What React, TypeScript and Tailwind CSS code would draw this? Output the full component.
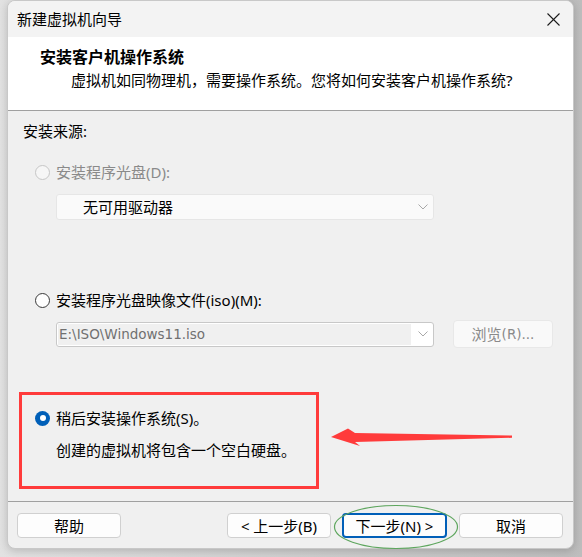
import type { ReactNode } from 'react';

const font = "font-['Noto_Sans','Noto_Sans_CJK_SC',sans-serif]";

function Radio({ state }: { state: 'disabled' | 'off' | 'on' }) {
  if (state === 'on') {
    return (
      <span className="w-[15px] h-[15px] shrink-0 rounded-full bg-[#005fb8] flex items-center justify-center">
        <span className="w-[6px] h-[6px] rounded-full bg-white" />
      </span>
    );
  }
  if (state === 'disabled') {
    return <span className="w-[15px] h-[15px] shrink-0 rounded-full border border-[#c6c6c6] bg-[#f6f6f6]" />;
  }
  return <span className="w-[15px] h-[15px] shrink-0 rounded-full border border-[#3a3a3a] bg-white" />;
}

function Chevron() {
  return (
    <svg width="10" height="6" viewBox="0 0 10 6" className="shrink-0">
      <polyline points="0.5,0.5 5,5 9.5,0.5" fill="none" stroke="#a8a8a8" strokeWidth="1" />
    </svg>
  );
}

function Button({ children, focused, width = 'w-[104px]' }: { children: ReactNode; focused?: boolean; width?: string }) {
  return (
    <button
      type="button"
      className={
        'h-[25px] rounded-[4px] bg-[#fdfdfd] text-[15px] leading-[20px] text-black flex items-center justify-center ' +
        width +
        (focused ? ' border-2 border-[#005fb8]' : ' border border-[#d0d0d0]')
      }
    >
      {children}
    </button>
  );
}

export default function App() {
  return (
    <div className={`relative w-[582px] h-[557px] overflow-hidden bg-linear-to-r from-[#e2e2e2] to-[#bdbdbd] ${font}`}>
      {/* wizard window */}
      <div className="ml-[7px] w-[567px] h-[549px] rounded-[8px] border border-[#c8c8c8] bg-[#f0f0f0] overflow-hidden flex flex-col shadow-[0_2px_8px_rgba(0,0,0,0.18)]">
        {/* title bar */}
        <div className="h-[36px] shrink-0 bg-[#f3f3f3] flex items-center justify-between pl-[9px] pr-[13px]">
          <span className="text-[15px] leading-[20px] text-black">新建虚拟机向导</span>
          <svg width="13" height="13" viewBox="0 0 13 13">
            <line x1="0.5" y1="0.5" x2="12.5" y2="12.5" stroke="#1a1a1a" strokeWidth="1.1" />
            <line x1="12.5" y1="0.5" x2="0.5" y2="12.5" stroke="#1a1a1a" strokeWidth="1.1" />
          </svg>
        </div>

        {/* header */}
        <div className="h-[74px] shrink-0 bg-white border-b border-[#a0a0a0] pt-[9px]">
          <div className="pl-[32px] text-[16px] leading-[22px] font-bold text-black">安装客户机操作系统</div>
          <div className="pl-[63px] mt-[2px] text-[15px] leading-[20px] text-black">
            虚拟机如同物理机，需要操作系统。您将如何安装客户机操作系统?
          </div>
        </div>

        {/* body */}
        <div className="flex-1 flex flex-col pt-[10px] text-[15px] leading-[20px] text-black">
          <div className="pl-[15px]">安装来源:</div>

          <div className="mt-[21px] pl-[27px] flex items-center gap-[6px] h-[20px]">
            <Radio state="disabled" />
            <span className="text-[#8a8a8a]">安装程序光盘(D):</span>
          </div>

          <div className="mt-[12px] ml-[48px] w-[378px] h-[26px] bg-[#fafafa] border border-[#e6e6e6] rounded-[3px] flex items-center justify-between pl-[26px] pr-[5px]">
            <span>无可用驱动器</span>
            <Chevron />
          </div>

          <div className="mt-[70px] pl-[27px] flex items-center gap-[6px] h-[20px]">
            <Radio state="off" />
            <span>安装程序光盘映像文件(iso)(M):</span>
          </div>

          <div className="mt-[10px] ml-[48px] h-[28px] flex items-center gap-[19px]">
            <div className="w-[378px] h-[25px] bg-white border border-[#c8c8c8] rounded-[3px] flex items-center pl-[1px] pr-[5px]">
              <div className="w-[353px] h-[21px] bg-[#f0f0f0] flex items-center pl-[1px] text-[13.5px] font-['DejaVu_Sans',sans-serif] text-[#707070]">
                E:\ISO\Windows11.iso
              </div>
              <div className="flex-1 flex justify-end">
                <Chevron />
              </div>
            </div>
            <div className="w-[100px] h-[28px] bg-[#f9f9f9] border border-[#e8e8e8] rounded-[4px] flex items-center justify-center text-[#8a8a8a]">
              <span>浏览</span>
              <span className="text-[13.5px] font-['DejaVu_Sans',sans-serif]">(R)...</span>
            </div>
          </div>

          <div className="mt-[44px] ml-[11px] w-[300px] h-[97px] border-[3px] border-[#ff3b3b] pt-[13px] pl-[13px]">
            <div className="flex items-center gap-[6px] h-[20px]">
              <Radio state="on" />
              <span>稍后安装操作系统(S)。</span>
            </div>
            <div className="mt-[12px] pl-[21px]">创建的虚拟机将包含一个空白硬盘。</div>
          </div>
        </div>

        {/* footer */}
        <div className="h-[47px] shrink-0 border-t border-[#a0a0a0] pt-[11px] pl-[9px] pr-[10px] flex items-start">
          <Button>帮助</Button>
          <div className="flex-1" />
          <Button>&lt; 上一步(B)</Button>
          <div className="w-[11px]" />
          <Button focused width="w-[105px]">下一步(N) &gt;</Button>
          <div className="w-[12px]" />
          <Button>取消</Button>
        </div>
      </div>

      {/* annotation: red arrow */}
      <svg
        className="absolute left-[325px] top-[424px]"
        width="192"
        height="28"
        viewBox="325 424 192 28"
      >
        <polygon
          points="331,437 348,428.5 355,433 512,435.6 512,437.8 355,442 360,446"
          fill="#ff3b3b"
        />
      </svg>

      {/* annotation: green ellipse */}
      <svg className="absolute left-[333px] top-[504px]" width="126" height="46" viewBox="0 0 126 46">
        <ellipse cx="63" cy="23" rx="61.5" ry="21.5" fill="none" stroke="#5ea65e" strokeWidth="1.2" />
      </svg>
    </div>
  );
}
